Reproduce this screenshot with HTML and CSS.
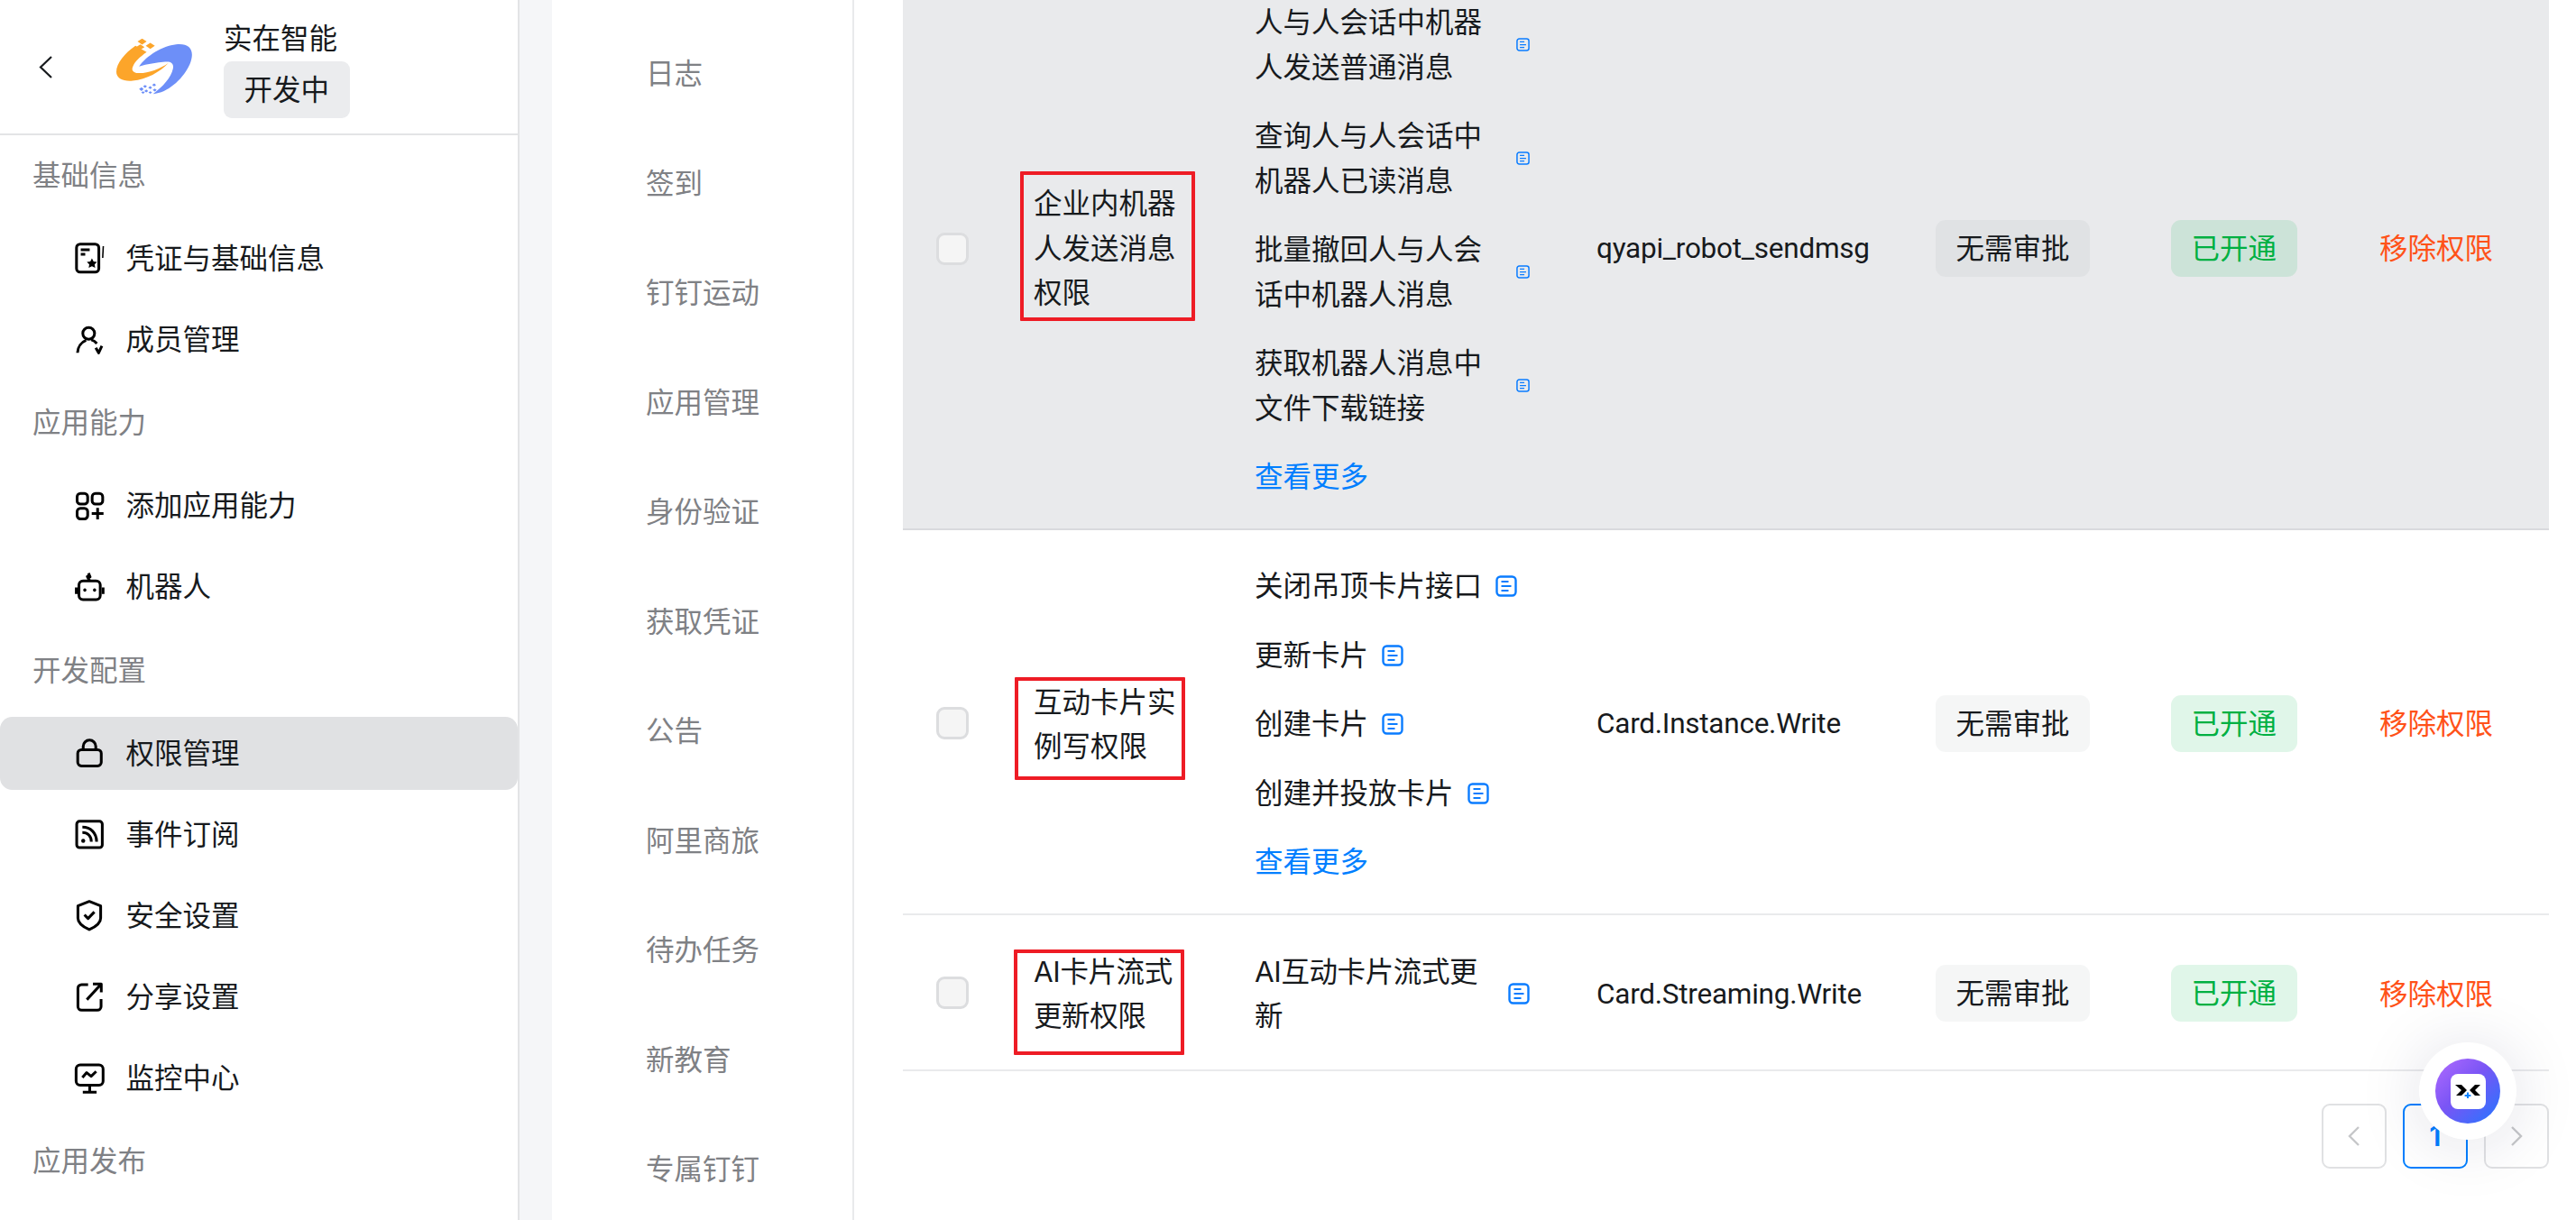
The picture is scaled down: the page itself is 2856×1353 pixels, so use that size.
FILE: index.html
```html
<!DOCTYPE html>
<html lang="zh-CN">
<head>
<meta charset="utf-8">
<title>权限管理</title>
<link rel="stylesheet" href="styles.css">
</head>
<body>
<aside class="sidebar">
  <header class="app-head">
    <svg class="back" viewBox="0 0 15 25"><path d="M14 1 2 12.5 14 24"/></svg>
    <svg class="logo" viewBox="90 70 250 185">
      <path fill="#fca52a" d="M153 92C118 116 90 150 90 178c0 22 24 32 54 29 46-4 90-29 118-59-28 21-72 36-100 34-18-1-24-11-16-25 6-12 20-27 44-44l-37-21z"/>
      <path fill="#6d8ff8" d="M165 160c24-36 78-68 122-73 38-4 56 12 52 42-5 40-48 92-92 112-12 5-24 8-36 10 32-24 60-54 66-84 3-16-6-24-26-22-28 2-60 8-86 15z"/>
      <path fill="#fca52a" d="M160 78l15-10 15 10-15 10zM187 92l15-10 15 10-15 10zM155 96l14-9 14 9-14 9z"/>
      <path fill="#6d8ff8" d="M165 235l8-6 7 6-7 6zM178 226l7-5 6 5-6 5zM182 241l7-5 6 5-6 5zM172 246l6-4 6 4-6 4zM195 230l7-5 6 5-6 5zM196 246l6-4 6 4-6 4zM208 221l7-5 6 5-6 5zM210 238l7-5 6 5-6 5z"/>
    </svg>
    <div class="app-meta">
      <div class="app-name">实在智能</div>
      <span class="app-tag">开发中</span>
    </div>
  </header>
  <nav class="nav">
    <div class="nav-title">基础信息</div>
    <a class="nav-item">
      <svg class="nav-icon" viewBox="0 0 16 16"><rect x="1.700" y="1.200" width="11" height="13.800" rx="1.800"/><path d="M3.800 4h4.400M3.800 6.200h2.200"/><path class="fill" d="m9.300 8.200.8 1.600 1.700.2-1.200 1.200.3 1.700-1.600-.8-1.600.8.3-1.700L6.800 10l1.700-.2z"/><path class="thin" d="M14.900 2.200 14.600 8"/></svg>
      <span>凭证与基础信息</span>
    </a>
    <a class="nav-item">
      <svg class="nav-icon" viewBox="0 0 16 16"><circle cx="7.700" cy="5.200" r="2.900"/><path d="M2.200 14.800c.1-3 2-5.300 4.200-6.200M9 8.400c1.100.3 2 .9 2.700 1.800M11.200 12.300l1.400 2.500 1.600-3.400"/></svg>
      <span>成员管理</span>
    </a>
    <div class="nav-title">应用能力</div>
    <a class="nav-item">
      <svg class="nav-icon" viewBox="0 0 16 16"><rect x="2" y="1.900" width="5.200" height="5.200" rx="1.600"/><rect x="9.400" y="1.900" width="5.200" height="5.200" rx="1.600"/><rect x="2" y="9.200" width="5.200" height="5.200" rx="1.600"/><path d="M9.200 11.800h5.800M12.100 9v5.700"/></svg>
      <span>添加应用能力</span>
    </a>
    <a class="nav-item">
      <svg class="nav-icon" viewBox="0 0 16 16"><rect x="2.900" y="5" width="10.500" height="9.200" rx="2"/><path d="M8.200 5 7 2.800 8.400 3 7.600 1.200M1.600 8.200v3.200M14.800 8.200v3.200"/><path class="fill" d="M5.800 8.700a.8.8 0 1 0 .01 0zM10.600 8.700a.8.8 0 1 0 .01 0z"/></svg>
      <span>机器人</span>
    </a>
    <div class="nav-title">开发配置</div>
    <a class="nav-item nav-item--active">
      <svg class="nav-icon" viewBox="0 0 16 16"><rect x="2.300" y="6.400" width="11.600" height="8" rx="1.800"/><path d="M5 6.400V4.800a3.100 3.100 0 0 1 6.200 0v1.600"/></svg>
      <span>权限管理</span>
    </a>
    <a class="nav-item">
      <svg class="nav-icon" viewBox="0 0 16 16"><rect x="1.800" y="1.700" width="12.600" height="13" rx="1.400"/><path d="M4.600 7.200c2.600 0 4.400 1.800 4.400 4.600M4.600 4.600c4.200 0 7 3 7 7.200"/><circle class="fill" cx="5" cy="11.300" r="1"/></svg>
      <span>事件订阅</span>
    </a>
    <a class="nav-item">
      <svg class="nav-icon" viewBox="0 0 16 16"><path d="M8 1.200 13.600 3.400v6c0 2.400-3 4.500-5.600 5.700C5.400 13.900 2.400 11.800 2.400 9.400v-6z"/><path d="m5.600 7.800 1.800 1.800 3.100-3.200"/></svg>
      <span>安全设置</span>
    </a>
    <a class="nav-item">
      <svg class="nav-icon" viewBox="0 0 16 16"><path d="M7.400 2.200H4.200A1.800 1.800 0 0 0 2.400 4v9A1.800 1.800 0 0 0 4.200 14.800h7.800A1.800 1.800 0 0 0 13.800 13V9.300"/><path d="M6.800 9.600 13.800 2M9.800 1.900h4.100V6"/></svg>
      <span>分享设置</span>
    </a>
    <a class="nav-item">
      <svg class="nav-icon" viewBox="0 0 16 16"><rect x="1.500" y="1.800" width="13.300" height="10" rx="2"/><path d="M4.600 8 6.700 5.600l2.200 1.800 2.500-2.400M8.200 11.800v3M4.800 15.200h6.800"/></svg>
      <span>监控中心</span>
    </a>
    <div class="nav-title">应用发布</div>
  </nav>
</aside>

<main class="panel">
  <ul class="tabs">
    <li>日志</li>
    <li>签到</li>
    <li>钉钉运动</li>
    <li>应用管理</li>
    <li>身份验证</li>
    <li>获取凭证</li>
    <li>公告</li>
    <li>阿里商旅</li>
    <li>待办任务</li>
    <li>新教育</li>
    <li>专属钉钉</li>
  </ul>

  <section class="content">
    <div class="table">
      <div class="row row--hover">
        <span class="check"></span>
        <div class="name"><span class="mark mark--a"></span>企业内机器人发送消息权限</div>
        <div class="apis">
          <div class="api api--wrap"><span class="api-text">人与人会话中机器人发送普通消息</span><svg class="doc doc--small" viewBox="0 0 24 24"><use href="#doc"/></svg></div>
          <div class="api api--wrap"><span class="api-text">查询人与人会话中机器人已读消息</span><svg class="doc doc--small" viewBox="0 0 24 24"><use href="#doc"/></svg></div>
          <div class="api api--wrap"><span class="api-text">批量撤回人与人会话中机器人消息</span><svg class="doc doc--small" viewBox="0 0 24 24"><use href="#doc"/></svg></div>
          <div class="api api--wrap"><span class="api-text">获取机器人消息中文件下载链接</span><svg class="doc doc--small" viewBox="0 0 24 24"><use href="#doc"/></svg></div>
          <a class="more">查看更多</a>
        </div>
        <div class="scope">qyapi_robot_sendmsg</div>
        <div><span class="tag">无需审批</span></div>
        <div><span class="tag tag--ok">已开通</span></div>
        <a class="remove">移除权限</a>
      </div>

      <div class="row row--mid">
        <span class="check"></span>
        <div class="name"><span class="mark mark--b"></span>互动卡片实例写权限</div>
        <div class="apis">
          <div class="api"><span class="api-text">关闭吊顶卡片接口</span><svg class="doc" viewBox="0 0 24 24"><use href="#doc"/></svg></div>
          <div class="api"><span class="api-text">更新卡片</span><svg class="doc" viewBox="0 0 24 24"><use href="#doc"/></svg></div>
          <div class="api"><span class="api-text">创建卡片</span><svg class="doc" viewBox="0 0 24 24"><use href="#doc"/></svg></div>
          <div class="api"><span class="api-text">创建并投放卡片</span><svg class="doc" viewBox="0 0 24 24"><use href="#doc"/></svg></div>
          <a class="more">查看更多</a>
        </div>
        <div class="scope">Card.Instance.Write</div>
        <div><span class="tag">无需审批</span></div>
        <div><span class="tag tag--ok">已开通</span></div>
        <a class="remove">移除权限</a>
      </div>

      <div class="row row--short">
        <span class="check"></span>
        <div class="name"><span class="mark mark--c"></span>AI卡片流式更新权限</div>
        <div class="apis">
          <div class="api api--tight"><span class="api-text">AI互动卡片流式更新</span><svg class="doc" viewBox="0 0 24 24"><use href="#doc"/></svg></div>
        </div>
        <div class="scope">Card.Streaming.Write</div>
        <div><span class="tag">无需审批</span></div>
        <div><span class="tag tag--ok">已开通</span></div>
        <a class="remove">移除权限</a>
      </div>
    </div>

    <div class="pager">
      <span class="page"><svg viewBox="0 0 14 24"><path d="M12 2 2 12l10 10"/></svg></span>
      <span class="page page--current">1</span>
      <span class="page"><svg viewBox="0 0 14 24"><path d="m2 2 10 10L2 22"/></svg></span>
    </div>
  </section>
</main>

<button class="fab" type="button" aria-label="助手">
  <span class="fab-disc">
    <span class="fab-card">
      <svg viewBox="0 0 28 16">
        <path fill="#000" d="M0 1h7l6 6-6 6H1l6-6z"/>
        <path fill="#000" d="M28 1h-6l-6 6 6 6h6l-6-6z"/>
        <path fill="#0a84ff" d="M13 9.500h2V12h2.400v2H15v2h-2v-2h-2.400v-2H13z"/>
      </svg>
    </span>
  </span>
</button>

<svg class="defs" aria-hidden="true">
  <symbol id="doc" viewBox="0 0 24 24">
    <rect x="1.500" y="1.500" width="21" height="21" rx="4" fill="none" stroke="#0a7cff" stroke-width="2.400"/>
    <path d="M6.500 7h8M6.500 12h11M6.500 17h8" fill="none" stroke="#0a7cff" stroke-width="2"/>
  </symbol>
</svg>
</body>
</html>
```

FILE: styles.css
```css
* { box-sizing: border-box; }

html, body {
  margin: 0;
  height: 100%;
  overflow: hidden;
}

body {
  display: flex;
  background: #f5f6f8;
  color: #171a1d;
  font-family: Inter, "Noto Sans CJK SC", sans-serif;
  font-size: 31.5px;
  line-height: 49.5px;
}

a { color: inherit; text-decoration: none; }

/* sidebar */
.sidebar {
  flex: 0 0 576px;
  height: 100%;
  overflow: hidden;
  background: #fff;
  border-right: 2px solid #e3e4e6;
}

.app-head {
  display: flex;
  align-items: center;
  height: 150px;
  padding-left: 43px;
  border-bottom: 2px solid #e3e4e6;
}

.back {
  width: 15px;
  height: 25px;
  margin-right: 71px;
  fill: none;
  stroke: #171a1d;
  stroke-width: 2.2;
}

.logo {
  width: 84px;
  height: 63px;
  margin-right: 35px;
}

.app-meta { margin-top: 2px; }

.app-name {
  line-height: 45px;
  margin-bottom: 3px;
}

.app-tag {
  display: block;
  width: fit-content;
  height: 63px;
  padding: 0 22.5px;
  border-radius: 9px;
  background: #ebecee;
  line-height: 63px;
}

.nav-title {
  height: 54px;
  margin: 25.5px 0 24px;
  padding-left: 36px;
  color: #7f8185;
  line-height: 54px;
}

.nav-title:first-child { margin-top: 17.5px; }

.nav-item {
  display: flex;
  align-items: center;
  gap: 22.5px;
  height: 81px;
  margin-bottom: 9px;
  padding-left: 81px;
  border-radius: 13.5px;
  line-height: 81px;
}

.nav-item--active { background: #e0e1e3; }

.nav-icon {
  flex: none;
  width: 36px;
  height: 36px;
  fill: none;
  stroke: #000;
  stroke-width: 1.35;
  stroke-linejoin: round;
}

.nav-icon .fill { fill: #000; stroke: none; }
.nav-icon .thin { stroke-width: .7; }

/* panel */
.panel {
  flex: 1;
  display: flex;
  min-width: 0;
  margin-left: 36px;
  background: #fff;
}

.tabs {
  flex: 0 0 335px;
  margin: 0;
  padding: 21px 0 0 104px;
  list-style: none;
  overflow: hidden;
  border-right: 2px solid #e9eaec;
  color: #7f8185;
}

.tabs li {
  height: 121.5px;
  line-height: 121.5px;
}

/* table */
.content {
  flex: 1;
  min-width: 0;
  padding: 0 30px 0 54px;
  overflow: hidden;
}

.table { margin-top: -33.5px; }

.row {
  display: grid;
  grid-template-columns: 145px 245px 379px 376px 261px 231px 1fr;
  align-items: center;
  padding: 33.75px 0 32px;
  border-bottom: 2px solid #e9eaec;
}

.row--hover {
  background: #e9eaec;
  border-bottom-color: #d9dadd;
}

.row--hover > :not(.apis) { margin-bottom: 3px; }

.row--mid { padding: 37.5px 0 32px; }
.row--short { padding: 38px 0 34px; }

.row--mid .tag,
.row--short .tag,
.row--mid .check,
.row--short .check { margin-bottom: 2px; }

.row--short .name,
.row--short .api-text { letter-spacing: -.4px; }

.check {
  width: 36px;
  height: 36px;
  margin-left: 37px;
  border: 3px solid #dcdddf;
  border-radius: 9px;
  background: #f5f5f5;
}

.name {
  position: relative;
  width: 170px;
}

.mark {
  position: absolute;
  border: 4px solid #ee1c25;
  border-radius: 1px;
  pointer-events: none;
}

.mark--a { left: -15px; top: -11px; width: 194px; height: 166px; }
.mark--b { left: -21px; top: -2.5px; width: 189px; height: 114px; }
.mark--c { left: -22px; top: 0; width: 189px; height: 117px; }

.apis {
  display: flex;
  flex-direction: column;
  gap: 27px;
}

.api {
  display: flex;
  align-items: center;
  gap: 15px;
}

.api--wrap { gap: 20px; }
.api--wrap .api-text { flex: 0 0 270px; }
.api--tight { gap: 19px; }
.api--tight .api-text { flex: 0 0 262px; }

.doc {
  flex: none;
  width: 24px;
  height: 24px;
}

.doc--small {
  width: 15px;
  height: 15px;
}

.more { color: #007fff; }

.scope {
  font-family: Roboto, sans-serif;
  letter-spacing: -.25px;
}

.tag {
  display: inline-block;
  height: 63px;
  padding: 0 22.5px;
  border-radius: 11px;
  background: rgba(126, 134, 142, .08);
  line-height: 63px;
}

.tag--ok {
  background: rgba(0, 180, 70, .12);
  color: #00b042;
}

.remove { color: #ff5219; }

/* pager */
.pager {
  display: flex;
  justify-content: flex-end;
  gap: 18px;
  margin-top: 36px;
}

.page {
  display: flex;
  align-items: center;
  justify-content: center;
  width: 72px;
  height: 72px;
  border: 2px solid #e0e1e3;
  border-radius: 9px;
  color: #c6c7c9;
}

.page svg {
  width: 14px;
  height: 24px;
  fill: none;
  stroke: currentColor;
  stroke-width: 2.4;
}

.page--current {
  border-color: #007fff;
  color: #007fff;
  font-weight: 600;
}

/* floating button */
.fab {
  position: fixed;
  right: 66px;
  bottom: 89px;
  display: flex;
  align-items: center;
  justify-content: center;
  width: 108px;
  height: 108px;
  padding: 0;
  border: 0;
  border-radius: 50%;
  background: #fff;
  box-shadow: 0 4px 72px rgba(23, 26, 70, .13);
}

.fab-disc {
  display: flex;
  align-items: center;
  justify-content: center;
  width: 72px;
  height: 72px;
  border-radius: 50%;
  background: linear-gradient(135deg, #b26bff 0%, #7a55f5 45%, #2277ff 100%);
}

.fab-card {
  display: flex;
  align-items: center;
  justify-content: center;
  width: 39px;
  height: 39px;
  border-radius: 8px;
  background: #fff;
}

.fab-card svg { width: 28px; height: 16px; }

.defs { display: none; }
```
